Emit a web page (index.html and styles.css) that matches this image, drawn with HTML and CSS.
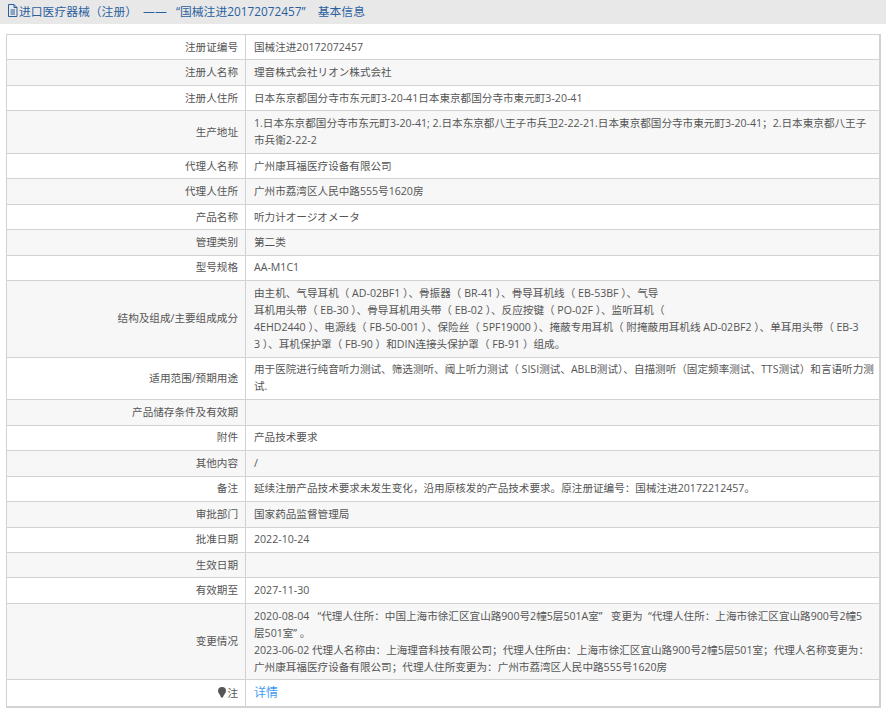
FILE: index.html
```html
<!DOCTYPE html>
<html lang="zh-CN">
<head>
  <meta charset="UTF-8">
  <meta name="viewport" content="width=device-width, initial-scale=1.0">
  <title>基本信息</title>
  <link rel="stylesheet" href="styles.css">
</head>
<body>

<!-- 标题 -->
<div class="title-bar">
  <svg class="icon-file" viewBox="0 0 11 13" width="11" height="13">
    <path d="M1.5 .5h5.5l3 3v9h-8.500z M7 .5v3h3 M3.500 6h4.500 M3.500 8h4.500 M3.500 10h4.500" fill="none" stroke="#2a5f9e" stroke-width="1"/>
  </svg>
  <span>进口医疗器械（注册） &nbsp;—— &nbsp;&nbsp;“国械注进20172072457” &nbsp;&nbsp;&nbsp;基本信息</span>
</div>

<!-- 信息表格 -->
<table class="info">
  <tr><th>注册证编号</th><td>国械注进20172072457</td></tr>
  <tr><th>注册人名称</th><td>理音株式会社リオン株式会社</td></tr>
  <tr><th>注册人住所</th><td>日本东京都国分寺市东元町3-20-41日本東京都国分寺市東元町3-20-41</td></tr>
  <tr><th>生产地址</th><td>1.日本东京都国分寺市东元町3-20-41; 2.日本东京都八王子市兵卫2-22-21.日本東京都国分寺市東元町3-20-41；2.日本東京都八王子市兵衛2-22-2</td></tr>
  <tr><th>代理人名称</th><td>广州康耳福医疗设备有限公司</td></tr>
  <tr><th>代理人住所</th><td>广州市荔湾区人民中路555号1620房</td></tr>
  <tr><th>产品名称</th><td>听力计オージオメータ</td></tr>
  <tr><th>管理类别</th><td>第二类</td></tr>
  <tr><th>型号规格</th><td>AA-M1C1</td></tr>
  <tr><th>结构及组成/主要组成成分</th><td>由主机、气导耳机（ AD-02BF1 ）、骨振器（ BR-41 ）、骨导耳机线（ EB-53BF ）、气导<br>耳机用头带（ EB-30 ）、骨导耳机用头带（ EB-02 ）、反应按键（ PO-02F ）、监听耳机（<br>4EHD2440 ）、电源线（ FB-50-001 ）、保险丝（ 5PF19000 ）、掩蔽专用耳机（ 附掩蔽用耳机线 AD-02BF2 ）、单耳用头带（ EB-3<br>3 ）、耳机保护罩（ FB-90 ）和DIN连接头保护罩（ FB-91 ）组成。</td></tr>
  <tr><th>适用范围/预期用途</th><td>用于医院进行纯音听力测试、筛选测听、阈上听力测试（ SISI测试、ABLB测试）、自描测听（固定频率测试、TTS测试）和言语听力测试.</td></tr>
  <tr><th>产品储存条件及有效期</th><td></td></tr>
  <tr><th>附件</th><td>产品技术要求</td></tr>
  <tr><th>其他内容</th><td>/</td></tr>
  <tr><th>备注</th><td>延续注册产品技术要求未发生变化，沿用原核发的产品技术要求。原注册证编号：国械注进20172212457。</td></tr>
  <tr><th>审批部门</th><td>国家药品监督管理局</td></tr>
  <tr><th>批准日期</th><td>2022-10-24</td></tr>
  <tr><th>生效日期</th><td></td></tr>
  <tr><th>有效期至</th><td>2027-11-30</td></tr>
  <tr><th>变更情况</th><td>2020-08-04 &nbsp;&nbsp;“代理人住所：中国上海市徐汇区宜山路900号2幢5层501A室” &nbsp;&nbsp;变更为 &nbsp;“代理人住所：上海市徐汇区宜山路900号2幢5<br>层501室” 。<br>2023-06-02 代理人名称由：上海理音科技有限公司；代理人住所由：上海市徐汇区宜山路900号2幢5层501室；代理人名称变更为：<br>广州康耳福医疗设备有限公司；代理人住所变更为：广州市荔湾区人民中路555号1620房</td></tr>
  <tr>
    <th>
      <svg class="icon-bulb" viewBox="0 0 8 11" width="8" height="11">
        <path d="M4 0a4 4 0 0 1 4 4c0 2-2 3-3 6.500h-2c-1-3.500-3-4.500-3-6.500a4 4 0 0 1 4-4z" fill="#555"/>
      </svg>注
    </th>
    <td><a href="#" class="detail">详情</a></td>
  </tr>
</table>

</body>
</html>
```

FILE: styles.css
```css
body { margin: 0; padding: 0; background: #fff; font-family: "Open Sans", "Noto Sans CJK SC", sans-serif; font-size: 10.6px; color: #555; }

/* 标题 */
.title-bar { display: flex; align-items: center; gap: 1px; height: 21px; padding: 0 0 3px 7px; background: #e8e8e8; font-size: 11.8px; color: #2a5f9e; }
.icon-file { flex: none; }

/* 信息表格 */
.info { width: 875px; margin: 10px 0 0 6px; border-collapse: collapse; table-layout: fixed; border: 1px solid #d2d2d2; border-right-width: 2px; border-bottom-width: 2px; }
.info tr:nth-child(even) { background: #f7f7f7; }
.info th, .info td { padding: 3.74px 4px 3.74px 8px; line-height: 17px; border: 1px solid #d2d2d2; word-break: break-all; vertical-align: middle; }
.info th { width: 223px; font-weight: normal; text-align: right; padding-right: 7px; }
.icon-bulb { vertical-align: -1px; margin-right: 1px; }
.detail { font-size: 12px; color: #3d9bf5; text-decoration: none; }
```
